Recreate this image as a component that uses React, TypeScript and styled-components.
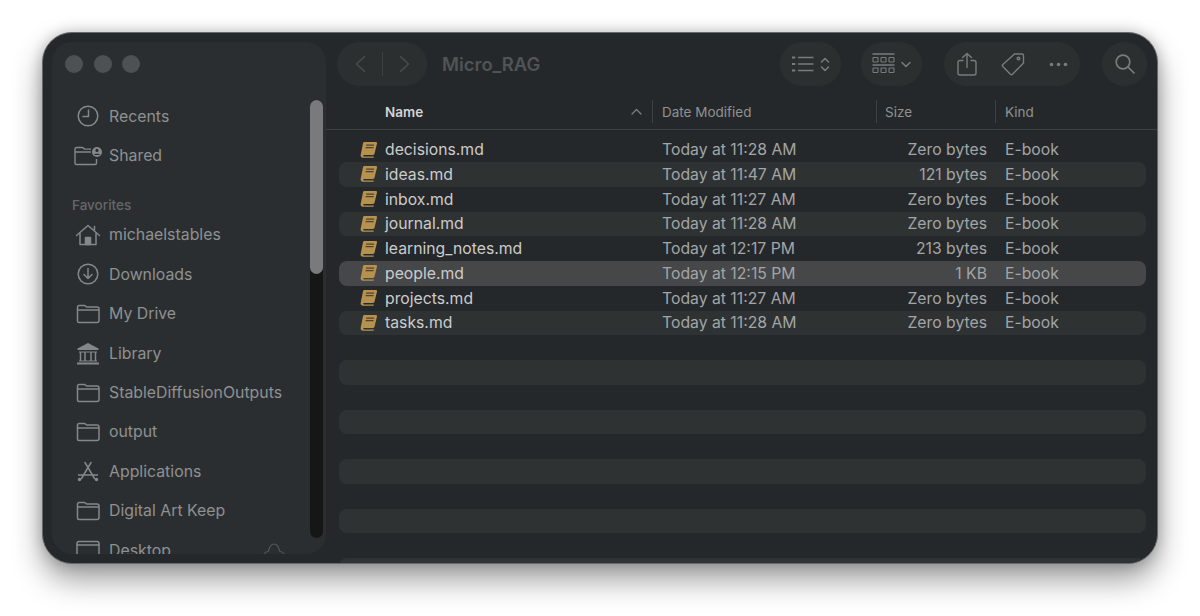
import React from "react";
import styled, { createGlobalStyle } from "styled-components";

const GlobalStyle = createGlobalStyle`
  html, body { margin: 0; height: 100%; background: #fff; overflow: hidden; }
  body { font-family: Inter, "Liberation Sans", sans-serif; }
`;

const Page = styled.div`
  padding: 32px 42px 0;
`;

const Window = styled.div`
  box-sizing: border-box;
  display: flex;
  width: 1116px;
  height: 532px;
  overflow: hidden;
  border: 1px solid #66696a;
  border-radius: 30px;
  background: #25282a;
  box-shadow: 0 16px 30px rgba(0, 0, 0, 0.38), 0 0 14px rgba(0, 0, 0, 0.22);
`;

const Sidebar = styled.aside`
  position: relative;
  flex: none;
  width: 274px;
  height: 512px;
  margin: 9px 0 0 9px;
  overflow: hidden;
  border-radius: 20px;
  background: #2b2e30;
`;

const Lights = styled.div`
  display: flex;
  gap: 10.5px;
  height: 44px;
  align-items: center;
  padding: 0 0 0 13px;
  margin-bottom: 10.5px;
`;

const Light = styled.span`
  width: 18px;
  height: 18px;
  border-radius: 50%;
  background: #4e5153;
`;

const NavItem = styled.div`
  display: flex;
  align-items: center;
  height: 39.4px;
  padding: 0 43px 0 21px;
  color: #8e9192;
  font-size: 15.85px;
  white-space: nowrap;
`;

const NavIcon = styled.span`
  display: flex;
  justify-content: center;
  align-items: center;
  flex: none;
  width: 30px;
  margin-right: 6px;
  color: #85888a;
`;

const NavTail = styled.span`
  display: flex;
  margin-left: auto;
  margin-right: -2px;
  color: #55585a;
`;

const NavHeading = styled.div`
  display: flex;
  align-items: flex-end;
  box-sizing: border-box;
  height: 40px;
  padding: 0 0 0.5px 20px;
  line-height: 20px;
  color: #65686a;
  font-size: 13.5px;
  font-weight: 500;
`;

const ScrollTrack = styled.div`
  position: absolute;
  top: 58px;
  right: 3px;
  bottom: 16px;
  width: 13px;
  border-radius: 7px;
  background: #151717;
`;

const ScrollThumb = styled.div`
  height: 174px;
  border-radius: 7px;
  background: #787a7b;
`;

const Main = styled.main`
  display: flex;
  flex-direction: column;
  flex: 1;
  min-width: 0;
`;

const Toolbar = styled.div`
  display: flex;
  align-items: center;
  flex: none;
  height: 44px;
  margin-top: 9px;
  padding: 0 10px 0 11px;
`;

const Pill = styled.div<{ $width: number; $gap: number; $offset: number }>`
  display: flex;
  align-items: center;
  justify-content: center;
  flex: none;
  gap: ${(p) => p.$gap}px;
  width: ${(p) => p.$width}px;
  height: 44px;
  margin-left: ${(p) => p.$offset}px;
  border-radius: 22px;
  background: #2b2f30;
  color: #797c7d;
`;

const NavPill = styled(Pill)`
  color: #484c4d;
`;

const NavDivider = styled.span`
  width: 1px;
  height: 24px;
  margin: 0 16px;
  background: #3c4041;
`;

const Title = styled.div`
  flex: 1;
  margin-left: 15px;
  color: #505455;
  font-size: 18.4px;
  font-weight: 600;
`;

const ColumnHeader = styled.div`
  display: grid;
  grid-template-columns: 326px 224px 119px 1fr;
  flex: none;
  height: 44px;
  align-items: end;
  box-sizing: border-box;
  padding-bottom: 6px;
  border-bottom: 1px solid #3d4142;
`;

const HeaderCell = styled.div<{ $first?: boolean; $inset?: number }>`
  display: flex;
  align-items: center;
  justify-content: space-between;
  box-sizing: border-box;
  height: 23px;
  padding: 0 9px 0 ${(p) => (p.$first ? 59 : p.$inset ?? 9)}px;
  border-left: ${(p) => (p.$first ? "none" : "1px solid #3d4142")};
  color: ${(p) => (p.$first ? "#d2d3d3" : "#8f9293")};
  font-size: 13.5px;
  font-weight: ${(p) => (p.$first ? 600 : 400)};
`;

const SortIcon = styled.span`
  display: flex;
  margin-right: 1px;
  color: #7f8283;
`;

const Rows = styled.div`
  flex: 1;
  min-height: 0;
  overflow: hidden;
  padding: 7.25px 11px 0 13px;
`;

const Row = styled.div<{ $striped: boolean; $selected: boolean }>`
  display: grid;
  grid-template-columns: 323px 218px 107px 1fr;
  align-items: center;
  height: 24.75px;
  border-radius: 8px;
  background: ${(p) =>
    p.$selected ? "#454748" : p.$striped ? "#2e3233" : "transparent"};
  font-size: 15.75px;
  white-space: nowrap;
`;

const NameCell = styled.div`
  display: flex;
  align-items: center;
  gap: 7px;
  padding-left: 21px;
  color: #cbcccc;
`;

const DimCell = styled.div<{ $right?: boolean; $inset?: boolean }>`
  padding-left: ${(p) => (p.$inset ? "18px" : 0)};
  color: #a3a5a6;
  text-align: ${(p) => (p.$right ? "right" : "left")};
`;

const Svg: React.FC<{ w: number; h: number; sw?: number; children: React.ReactNode }> = ({
  w,
  h,
  sw = 1.5,
  children,
}) => (
  <svg
    width={w}
    height={h}
    viewBox={`0 0 ${w} ${h}`}
    fill="none"
    stroke="currentColor"
    strokeWidth={sw}
    strokeLinecap="round"
    strokeLinejoin="round"
  >
    {children}
  </svg>
);

const FolderIcon = () => (
  <Svg w={24} h={20}>
    <path d="M1.5 5.5V3a1.5 1.5 0 0 1 1.5-1.5h5.5c1 0 1.3 1.6 2.5 1.6h10a2 2 0 0 1 2 2V16.5a2 2 0 0 1-2 2H3a1.5 1.5 0 0 1-1.5-1.5z" />
    <path d="M1.5 6h21" />
  </Svg>
);

const ClockIcon = () => (
  <Svg w={22} h={22}>
    <circle cx="11" cy="11" r="9.8" />
    <path d="M11.5 5v6.5H6" />
  </Svg>
);

const SharedIcon = () => (
  <svg width="28" height="20" viewBox="0 0 28 20" fill="none" stroke="currentColor" strokeWidth="1.4">
    <path d="M1 6V3a1.5 1.5 0 0 1 1.5-1.5h6c1 0 1.2 1.6 2.4 1.6H17M1 6h16M1 6v11a1.5 1.5 0 0 0 1.5 1.5h18.5a1.5 1.5 0 0 0 1.5-1.5v-4" />
    <circle cx="23" cy="6" r="5" fill="currentColor" stroke="none" />
    <circle cx="23" cy="4.4" r="1.6" fill="#2b2e30" stroke="none" />
    <path d="M20 9c.4-1.7 5.6-1.7 6 0z" fill="#2b2e30" stroke="none" />
  </svg>
);

const HomeIcon = () => (
  <Svg w={26} h={22}>
    <path d="M1.5 11.5 13 1.5l11.5 10" />
    <path d="M19.5 6V2.5" />
    <path d="M5 9v11.5h16V9" />
    <path d="M10.5 20.5v-7h5v7z" fill="currentColor" />
  </Svg>
);

const DownloadIcon = () => (
  <Svg w={22} h={22}>
    <circle cx="11" cy="11" r="9.8" />
    <path d="M11 5.5v10M7 11.5l4 4 4-4" />
  </Svg>
);

const LibraryIcon = () => (
  <svg width="24" height="23" viewBox="0 0 24 23" fill="none" stroke="currentColor">
    <path d="M12 1 22.5 6.5v1.5h-21V6.5z" fill="currentColor" stroke="none" />
    <path d="M4.5 10v9M9 10v9M15 10v9M19.5 10v9" strokeWidth="1.5" />
    <path d="M3 10h18M3 19h18" strokeWidth="1" />
    <path d="M1 21.5h22" strokeWidth="2" />
  </svg>
);

const AppsIcon = () => (
  <Svg w={24} h={21}>
    <path d="M9 1.5 18.5 17.5M15 1.5 5.5 17.5M2.5 14h19" />
    <circle cx="3.5" cy="18.5" r="1" fill="currentColor" />
    <circle cx="20.5" cy="18.5" r="1" fill="currentColor" />
  </Svg>
);

const DesktopIcon = () => (
  <Svg w={24} h={20}>
    <rect x="1" y="1.5" width="22" height="17" rx="2" />
    <path d="M1 5h22M7 17h10" />
  </Svg>
);

const CloudIcon = () => (
  <Svg w={22} h={14} sw={1.1}>
    <path d="M1 11c1.5-2 3-2.5 4.5-2.8C6.5 3 9 1 11 1s4.5 2 5.5 7c2 .5 3.5 1.5 4.5 3" />
  </Svg>
);

const BookIcon = () => (
  <svg width="18" height="18" viewBox="0 0 18 18">
    <path
      d="M4.6 1h11.2c.9 0 1.4.7 1.2 1.5l-2.5 10.3c-.2.7-.7 1.200-1.500 1.200H4.200c-1.400 0-1.400 1.500 0 1.500h9.400c.3 0 .4.700 0 .9-.2.200-.4.300-.7.300H3c-1.700 0-2.700-1.200-2.300-2.900L3 2.300C3.200 1.500 3.800 1 4.600 1z"
      fill="#b7924f"
    />
    <path d="M6.6 4.2h7M6.1 6.7h7" stroke="#4d4330" strokeWidth="1.2" strokeLinecap="round" />
  </svg>
);

const ChevronLeft = () => (
  <Svg w={11} h={18} sw={1.6}>
    <path d="M9.5 1.500 1.500 9l8 7.500" />
  </Svg>
);

const ChevronRight = () => (
  <Svg w={11} h={18} sw={1.6}>
    <path d="M1.500 1.500 9.500 9l-8 7.500" />
  </Svg>
);

const ListIcon = () => (
  <svg width="22" height="16" viewBox="0 0 22 16" fill="none" stroke="currentColor" strokeWidth="1.5">
    <path d="M6 1.5h15.5M6 8h15.5M6 14.5h15.5" />
    <path d="M.5 1.500h2M.5 8h2M.5 14.500h2" strokeWidth="2" strokeLinecap="round" />
  </svg>
);

const UpDownIcon = () => (
  <Svg w={10} h={15} sw={1.5}>
    <path d="M1.5 5 5 1.500 8.500 5M1.500 10 5 13.500 8.500 10" />
  </Svg>
);

const GroupIcon = () => (
  <svg width="23" height="22" viewBox="0 0 23 22" fill="none" stroke="currentColor">
    <path d="M.5 1h22M.5 12h22" strokeWidth="1.5" />
    <rect x="1" y="4.5" width="5" height="4.5" rx=".8" strokeWidth="1.1" />
    <rect x="9" y="4.5" width="5" height="4.5" rx=".8" strokeWidth="1.1" />
    <rect x="17" y="4.5" width="5" height="4.5" rx=".8" strokeWidth="1.1" />
    <rect x="1" y="15" width="5" height="4.5" rx=".8" strokeWidth="1.1" />
    <rect x="9" y="15" width="5" height="4.5" rx=".8" strokeWidth="1.1" />
    <rect x="17" y="15" width="5" height="4.5" rx=".8" strokeWidth="1.1" />
  </svg>
);

const ChevronDown = () => (
  <Svg w={10} h={7} sw={1.5}>
    <path d="M1 1.5 5 5.500 9 1.500" />
  </Svg>
);

const ShareIcon = () => (
  <Svg w={20} h={24} sw={1.4}>
    <path d="M6 8.5H3a2 2 0 0 0-2 2V21a2 2 0 0 0 2 2h14a2 2 0 0 0 2-2V10.500a2 2 0 0 0-2-2h-3" />
    <path d="M10 15.5V1.500M5.500 5.500 10 1.500l4.500 4" />
  </Svg>
);

const TagIcon = () => (
  <Svg w={24} h={24} sw={1.4}>
    <path d="M13.5 2H21a1.500 1.500 0 0 1 1.500 1.500v7.500L11.500 22.200a1.500 1.500 0 0 1-2.100 0l-7.600-7.600a1.500 1.500 0 0 1 0-2.100z" />
    <circle cx="17.5" cy="6.5" r="1.3" />
  </Svg>
);

const MoreIcon = () => (
  <svg width="19" height="5" viewBox="0 0 19 5" fill="currentColor">
    <circle cx="2.5" cy="2.5" r="1.8" />
    <circle cx="9.5" cy="2.5" r="1.8" />
    <circle cx="16.5" cy="2.5" r="1.8" />
  </svg>
);

const SearchIcon = () => (
  <Svg w={20} h={20} sw={1.7}>
    <circle cx="8" cy="8" r="6.8" />
    <path d="M13 13l6 6" />
  </Svg>
);

const SortChevron = () => (
  <Svg w={11} h={7} sw={1.2}>
    <path d="M1 6 5.5 1.5 10 6" />
  </Svg>
);

type Place = { label: string; icon: React.ReactNode; tail?: React.ReactNode };

const topPlaces: Place[] = [
  { label: "Recents", icon: <ClockIcon /> },
  { label: "Shared", icon: <SharedIcon /> },
];

const favorites: Place[] = [
  { label: "michaelstables", icon: <HomeIcon /> },
  { label: "Downloads", icon: <DownloadIcon /> },
  { label: "My Drive", icon: <FolderIcon /> },
  { label: "Library", icon: <LibraryIcon /> },
  { label: "StableDiffusionOutputs", icon: <FolderIcon /> },
  { label: "output", icon: <FolderIcon /> },
  { label: "Applications", icon: <AppsIcon /> },
  { label: "Digital Art Keep", icon: <FolderIcon /> },
  { label: "Desktop", icon: <DesktopIcon />, tail: <CloudIcon /> },
];

const files = [
  { name: "decisions.md", date: "Today at 11:28 AM", size: "Zero bytes" },
  { name: "ideas.md", date: "Today at 11:47 AM", size: "121 bytes" },
  { name: "inbox.md", date: "Today at 11:27 AM", size: "Zero bytes" },
  { name: "journal.md", date: "Today at 11:28 AM", size: "Zero bytes" },
  { name: "learning_notes.md", date: "Today at 12:17 PM", size: "213 bytes" },
  { name: "people.md", date: "Today at 12:15 PM", size: "1 KB" },
  { name: "projects.md", date: "Today at 11:27 AM", size: "Zero bytes" },
  { name: "tasks.md", date: "Today at 11:28 AM", size: "Zero bytes" },
];

const blankRows = Array.from({ length: 10 }, (_, i) => i + files.length);

const PlaceRow: React.FC<{ place: Place }> = ({ place }) => (
  <NavItem>
    <NavIcon>{place.icon}</NavIcon>
    {place.label}
    {place.tail && <NavTail>{place.tail}</NavTail>}
  </NavItem>
);

export default function App() {
  return (
    <Page>
      <GlobalStyle />
      <Window>
        <Sidebar>
          <Lights>
            <Light />
            <Light />
            <Light />
          </Lights>
          {topPlaces.map((p) => (
            <PlaceRow key={p.label} place={p} />
          ))}
          <NavHeading>Favorites</NavHeading>
          {favorites.map((p) => (
            <PlaceRow key={p.label} place={p} />
          ))}
          <ScrollTrack>
            <ScrollThumb />
          </ScrollTrack>
        </Sidebar>
        <Main>
          <Toolbar>
            <NavPill $width={90} $gap={0} $offset={0}>
              <ChevronLeft />
              <NavDivider />
              <ChevronRight />
            </NavPill>
            <Title>Micro_RAG</Title>
            <Pill $width={61} $gap={6} $offset={20}>
              <ListIcon />
              <UpDownIcon />
            </Pill>
            <Pill $width={61} $gap={6} $offset={20}>
              <GroupIcon />
              <ChevronDown />
            </Pill>
            <Pill $width={136} $gap={24} $offset={22}>
              <ShareIcon />
              <TagIcon />
              <MoreIcon />
            </Pill>
            <Pill $width={45} $gap={0} $offset={22}>
              <SearchIcon />
            </Pill>
          </Toolbar>
          <ColumnHeader>
            <HeaderCell $first>
              Name
              <SortIcon>
                <SortChevron />
              </SortIcon>
            </HeaderCell>
            <HeaderCell>Date Modified</HeaderCell>
            <HeaderCell $inset={8}>Size</HeaderCell>
            <HeaderCell>Kind</HeaderCell>
          </ColumnHeader>
          <Rows>
            {files.map((f, i) => (
              <Row key={f.name} $striped={i % 2 === 1} $selected={f.name === "people.md"}>
                <NameCell>
                  <BookIcon />
                  {f.name}
                </NameCell>
                <DimCell>{f.date}</DimCell>
                <DimCell $right>{f.size}</DimCell>
                <DimCell $inset>E-book</DimCell>
              </Row>
            ))}
            {blankRows.map((n) => (
              <Row key={n} $striped={n % 2 === 1} $selected={false} />
            ))}
          </Rows>
        </Main>
      </Window>
    </Page>
  );
}
